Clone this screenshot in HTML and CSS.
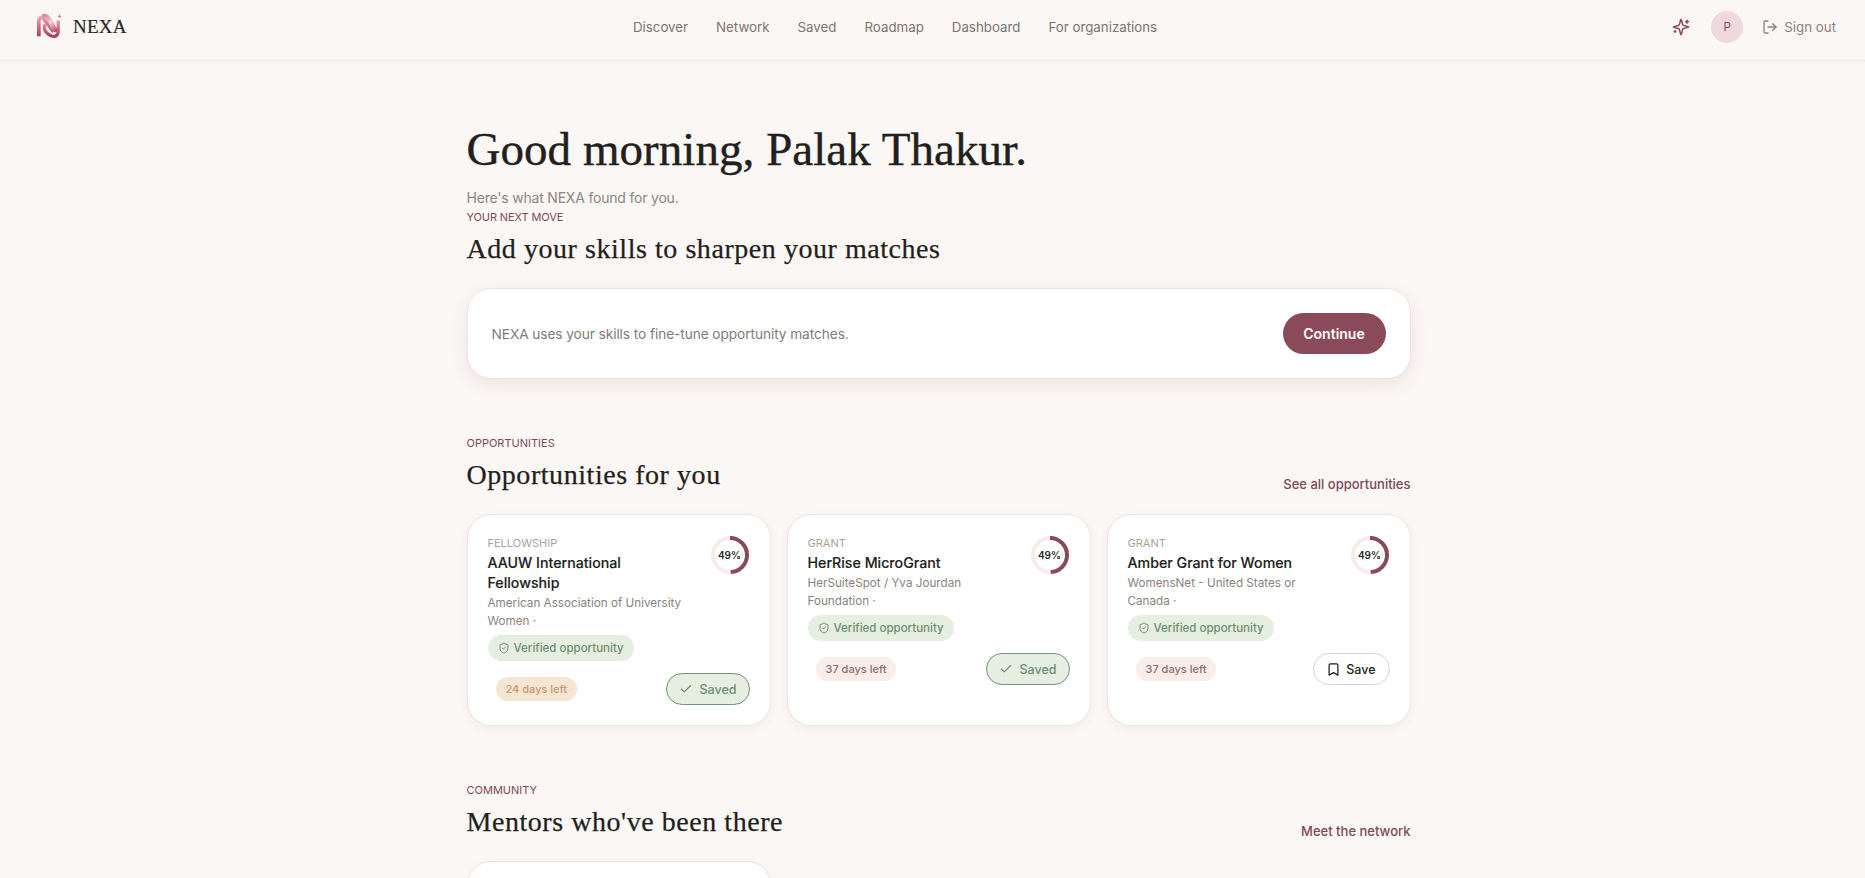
FILE: index.html
```html
<!DOCTYPE html>
<html lang="en">
<head>
  <meta charset="UTF-8" />
  <title>NEXA</title>
  <link rel="stylesheet" href="styles.css">
</head>
<body>
  <svg class="defs" width="0" height="0" aria-hidden="true">
    <defs>
      <linearGradient id="rib1" x1="0" y1="0" x2="1" y2="1">
        <stop offset="0" stop-color="#e27f98"/><stop offset=".5" stop-color="#f6ccd5"/><stop offset="1" stop-color="#b84e6a"/>
      </linearGradient>
      <linearGradient id="rib2" x1="0" y1="0" x2="0" y2="1">
        <stop offset="0" stop-color="#ee9fb1"/><stop offset="1" stop-color="#a83f5c"/>
      </linearGradient>
      <symbol id="i-shield" viewBox="0 0 24 24"><path d="M20 13c0 5-3.5 7.5-7.66 8.95a1 1 0 0 1-.67-.01C7.5 20.5 4 18 4 13V6a1 1 0 0 1 1-1c2 0 4.5-1.2 6.24-2.72a1.17 1.17 0 0 1 1.52 0C14.51 3.81 17 5 19 5a1 1 0 0 1 1 1z"/><path d="m9 12 2 2 4-4"/></symbol>
      <symbol id="i-check" viewBox="0 0 24 24"><path d="M20 6 9 17l-5-5"/></symbol>
      <symbol id="i-bookmark" viewBox="0 0 24 24"><path d="m19 21-7-4-7 4V5a2 2 0 0 1 2-2h10a2 2 0 0 1 2 2v16z"/></symbol>
    </defs>
  </svg>

  <!-- top bar -->
  <header class="topbar">
    <a class="brand">
      <svg class="brand-mark" viewBox="0 0 28 26" width="26" height="24">
        <path d="M3 24V8c0-4 3-5 5-3l11 14" fill="none" stroke="url(#rib2)" stroke-width="4"/>
        <path d="M7 3c4-2 6 1 8 4l4 8c2 3 3 3 4 0" fill="none" stroke="url(#rib1)" stroke-width="5"/>
        <path d="M9 11v5c1 5 8 9 12 8 3-1 3-4 3-7V7" fill="none" stroke="url(#rib2)" stroke-width="3.6"/>
        <path d="M25.500 0l.7 1.800 1.800.7-1.800.7-.7 1.800-.7-1.800-1.800-.7 1.800-.7z" fill="#d9708a"/>
      </svg>
      <span class="brand-name">NEXA</span>
    </a>
    <nav class="nav">
      <a>Discover</a>
      <a>Network</a>
      <a>Saved</a>
      <a>Roadmap</a>
      <a>Dashboard</a>
      <a>For organizations</a>
    </nav>
    <div class="top-actions">
      <svg class="ico-spark" viewBox="0 0 24 24" width="18" height="18"><path d="M9.937 15.5A2 2 0 0 0 8.5 14.063l-6.135-1.582a.5.5 0 0 1 0-.962L8.5 9.936A2 2 0 0 0 9.937 8.5l1.582-6.135a.5.5 0 0 1 .963 0L14.063 8.5A2 2 0 0 0 15.5 9.937l6.135 1.581a.5.5 0 0 1 0 .964L15.5 14.063a2 2 0 0 0-1.437 1.437l-1.582 6.135a.5.5 0 0 1-.963 0z"/><path d="M20 3v4"/><path d="M22 5h-4"/><path d="M4 17v2"/><path d="M5 18H3"/></svg>
      <div class="avatar">P</div>
      <a class="signout">
        <svg viewBox="0 0 24 24" width="16" height="16"><path d="M9 21H5a2 2 0 0 1-2-2V5a2 2 0 0 1 2-2h4"/><polyline points="16 17 21 12 16 7"/><line x1="21" y1="12" x2="9" y2="12"/></svg>
        Sign out
      </a>
    </div>
  </header>

  <main class="page">
    <h1 class="greeting">Good morning, Palak Thakur.</h1>
    <p class="lead">Here's what NEXA found for you.</p>

    <!-- next move -->
    <div class="eyebrow eyebrow-tight">YOUR NEXT MOVE</div>
    <h2 class="sec-title">Add your skills to sharpen your matches</h2>
    <div class="move-card">
      <p>NEXA uses your skills to fine-tune opportunity matches.</p>
      <button class="btn-primary">Continue</button>
    </div>

    <!-- opportunities -->
    <section class="section section-opps">
      <div class="eyebrow">OPPORTUNITIES</div>
      <div class="sec-head">
        <h2 class="sec-title">Opportunities for you</h2>
        <a class="sec-link">See all opportunities</a>
      </div>
      <div class="card-grid">

        <article class="card">
          <div class="card-top">
            <div class="card-text">
              <div class="card-type">FELLOWSHIP</div>
              <h3 class="card-title">AAUW International Fellowship</h3>
              <p class="card-org">American Association of University Women ·</p>
            </div>
            <div class="ring">
              <svg viewBox="0 0 38 38" width="38" height="38"><circle class="ring-bg" cx="19" cy="19" r="17"/><circle class="ring-fg" cx="19" cy="19" r="17" stroke-dasharray="52.3 106.8"/></svg>
              <span>49%</span>
            </div>
          </div>
          <div class="verified"><svg viewBox="0 0 24 24" width="12" height="12"><use href="#i-shield"/></svg>Verified opportunity</div>
          <div class="card-foot">
            <span class="days days-soon">24 days left</span>
            <button class="btn-save is-saved"><svg viewBox="0 0 24 24" width="14" height="14"><use href="#i-check"/></svg>Saved</button>
          </div>
        </article>

        <article class="card">
          <div class="card-top">
            <div class="card-text">
              <div class="card-type">GRANT</div>
              <h3 class="card-title">HerRise MicroGrant</h3>
              <p class="card-org">HerSuiteSpot / Yva Jourdan Foundation ·</p>
            </div>
            <div class="ring">
              <svg viewBox="0 0 38 38" width="38" height="38"><circle class="ring-bg" cx="19" cy="19" r="17"/><circle class="ring-fg" cx="19" cy="19" r="17" stroke-dasharray="52.3 106.8"/></svg>
              <span>49%</span>
            </div>
          </div>
          <div class="verified"><svg viewBox="0 0 24 24" width="12" height="12"><use href="#i-shield"/></svg>Verified opportunity</div>
          <div class="card-foot">
            <span class="days">37 days left</span>
            <button class="btn-save is-saved"><svg viewBox="0 0 24 24" width="14" height="14"><use href="#i-check"/></svg>Saved</button>
          </div>
        </article>

        <article class="card">
          <div class="card-top">
            <div class="card-text">
              <div class="card-type">GRANT</div>
              <h3 class="card-title">Amber Grant for Women</h3>
              <p class="card-org">WomensNet - United States or Canada ·</p>
            </div>
            <div class="ring">
              <svg viewBox="0 0 38 38" width="38" height="38"><circle class="ring-bg" cx="19" cy="19" r="17"/><circle class="ring-fg" cx="19" cy="19" r="17" stroke-dasharray="52.3 106.8"/></svg>
              <span>49%</span>
            </div>
          </div>
          <div class="verified"><svg viewBox="0 0 24 24" width="12" height="12"><use href="#i-shield"/></svg>Verified opportunity</div>
          <div class="card-foot">
            <span class="days">37 days left</span>
            <button class="btn-save"><svg viewBox="0 0 24 24" width="15" height="15"><use href="#i-bookmark"/></svg>Save</button>
          </div>
        </article>

      </div>
    </section>

    <!-- community -->
    <section class="section section-community">
      <div class="eyebrow">COMMUNITY</div>
      <div class="sec-head">
        <h2 class="sec-title">Mentors who've been there</h2>
        <a class="sec-link">Meet the network</a>
      </div>
      <div class="card-grid">
        <article class="card card-stub"></article>
      </div>
    </section>
  </main>
</body>
</html>
```

FILE: styles.css
```css
:root{--bg:#fbf7f4;--ink:#231f1d;--muted:#7d7574;--soft:#a89f9e;--wine:#8b4a5a;--line:#ece5e1;--green-bg:#e6eee2;--green-tx:#6f8d70}
*{box-sizing:border-box;margin:0;padding:0}
html,body{height:100%;overflow:hidden}
body{font-family:'Inter','Noto Sans',sans-serif;background:var(--bg);color:var(--ink)}
.defs{position:absolute}
/* top bar */
.topbar{height:61px;display:flex;align-items:center;justify-content:space-between;padding:0 29px 7px 36px;border-bottom:1px solid #efe9e5;box-shadow:0 1px 3px rgba(60,30,30,.05)}
.brand{display:flex;align-items:center;gap:11px}
.brand-mark{display:block;margin-top:-1px}
.brand-name{font-family:'Liberation Serif',serif;font-size:19px;letter-spacing:.25px;color:#2b2725;-webkit-text-stroke:.2px #2b2725}
.nav{display:flex;gap:28px;margin-right:9px}
.nav a{font-size:13.3px;color:#7b7472}
.top-actions{display:flex;align-items:center}
.ico-spark{fill:none;stroke:var(--wine);stroke-width:2;stroke-linecap:round;stroke-linejoin:round}
.avatar{width:32px;height:32px;margin-left:21px;border-radius:50%;background:#f0d9de;color:var(--wine);font-size:11.5px;display:flex;align-items:center;justify-content:center}
.signout{display:flex;align-items:center;gap:6px;margin-left:19px;font-size:13.3px;color:#8a8280}
.signout svg{fill:none;stroke:#8a8280;stroke-width:2;stroke-linecap:round;stroke-linejoin:round}
/* page */
.page{width:944px;margin-left:466.5px;padding-top:60px}
.greeting{font-family:'Liberation Serif',serif;font-weight:400;font-size:47px;line-height:56px;letter-spacing:.05px;color:var(--ink);-webkit-text-stroke:.4px var(--ink)}
.lead{margin-top:11px;font-size:14px;line-height:20px;letter-spacing:-.2px;color:#8c8483}
.eyebrow{font-size:11px;line-height:16px;color:#7d4a57}
.eyebrow-tight{margin-top:1px;letter-spacing:-.1px}
.sec-title{font-family:'Liberation Serif',serif;font-weight:400;font-size:28px;line-height:34px;letter-spacing:.55px;color:var(--ink);-webkit-text-stroke:.25px var(--ink)}
.eyebrow + .sec-title,.eyebrow + .sec-head{margin-top:7px}
.move-card{margin-top:22px;height:91px;padding:0 24px;display:flex;align-items:center;justify-content:space-between;background:#fff;border:1px solid var(--line);border-radius:24px;box-shadow:0 6px 18px rgba(90,50,50,.09)}
.move-card p{font-size:13.7px;letter-spacing:-.08px;color:#817a78}
.btn-primary{width:103px;height:41px;border:none;border-radius:21px;background:var(--wine);color:#fff;font:600 14px 'Inter',sans-serif}
.section-opps{margin-top:56px}
.section-community{margin-top:56px}
.sec-head{display:flex;align-items:flex-end;justify-content:space-between}
.sec-link{font-size:13px;font-weight:500;line-height:20px;color:#7d4a57;margin-bottom:-2px}
.card-grid{display:grid;grid-template-columns:repeat(3,1fr);gap:16px;margin-top:22px}
/* cards */
.card{height:212px;padding:20px;background:#fff;border:1px solid var(--line);border-radius:24px;box-shadow:0 3px 10px rgba(90,50,50,.05)}
.card-stub{height:120px}
.card-top{display:flex;justify-content:space-between;align-items:flex-start}
.card-text{width:205px}
.card-type{font-size:11px;line-height:16px;color:#a89f9e}
.card-title{margin-top:2px;max-width:170px;font-size:14.2px;font-weight:500;line-height:20px;color:var(--ink);-webkit-text-stroke:.15px var(--ink)}
.card-org{margin-top:1px;font-size:11.7px;line-height:18px;color:#8a8280}
.ring{position:relative;width:38px;height:38px;margin:1px 1px 0 0}
.ring svg{display:block;transform:rotate(-90deg)}
.ring circle{fill:none;stroke-width:4}
.ring-bg{stroke:#f8ecea}
.ring-fg{stroke:var(--wine)}
.ring span{position:absolute;inset:0;display:flex;align-items:center;justify-content:center;font-size:10px;font-weight:600;color:var(--ink)}
.verified{display:inline-flex;align-items:center;gap:4px;height:26px;margin-top:5px;padding:0 10px;border-radius:13px;background:var(--green-bg);color:var(--green-tx);font-size:11.5px;font-weight:500}
.verified svg{fill:none;stroke:var(--green-tx);stroke-width:2;stroke-linecap:round;stroke-linejoin:round}
.card-foot{display:flex;align-items:center;justify-content:space-between;margin-top:12px;padding-left:8px}
.days{height:24px;padding:0 10px;display:flex;align-items:center;border-radius:12px;background:#f9ece9;color:#8a6e6e;font-size:11px;font-weight:500}
.days-soon{background:#f6e5d2;color:#c59a70}
.btn-save{height:32px;padding:0 13px 0 12px;display:flex;align-items:center;gap:5px;border:1px solid #d9d2cf;border-radius:16px;background:#fff;color:var(--ink);font:500 12.5px 'Inter',sans-serif}
.btn-save svg{fill:none;stroke:currentColor;stroke-width:2;stroke-linecap:round;stroke-linejoin:round}
.btn-save.is-saved{gap:7px;padding:0 12px;background:var(--green-bg);border-color:#76907a;color:var(--green-tx);font-size:12.5px}
```
